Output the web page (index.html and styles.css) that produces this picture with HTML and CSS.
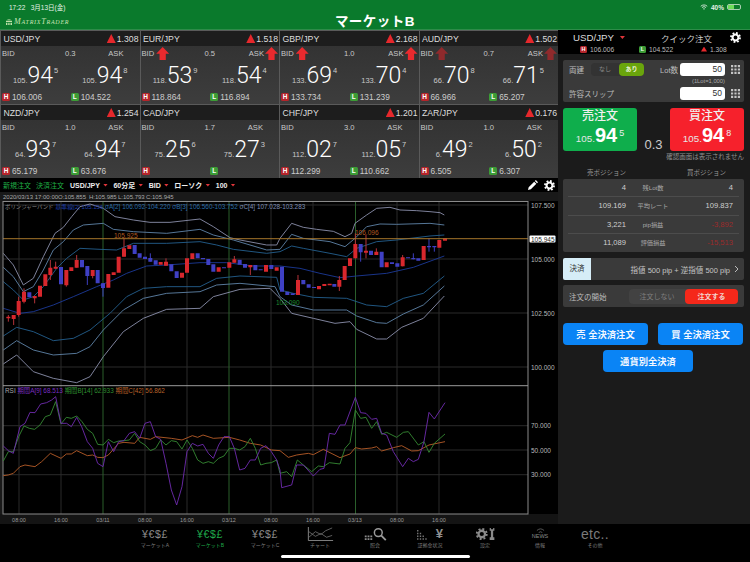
FILE: index.html
```html
<!DOCTYPE html>
<html lang="ja">
<head>
<meta charset="utf-8">
<title>マーケットB</title>
<link rel="stylesheet" href="styles.css">
</head>
<body>
<svg class="defs" width="0" height="0" aria-hidden="true">
  <symbol id="gear" viewBox="0 0 16 16">
    <circle cx="8" cy="8" r="4.3" fill="none" stroke="currentColor" stroke-width="3"/>
    <circle cx="8" cy="8" r="6.6" fill="none" stroke="currentColor" stroke-width="2.6" stroke-dasharray="2.6 2.58"/>
  </symbol>
  <symbol id="dots" viewBox="0 0 9 9">
    <path fill="currentColor" d="M0 0h2.2v2.2H0zM3.4 0h2.2v2.2H3.4zM6.8 0H9v2.2H6.8zM0 3.4h2.2v2.2H0zM3.4 3.4h2.2v2.2H3.4zM6.8 3.4H9v2.2H6.8zM0 6.8h2.2V9H0zM3.4 6.8h2.2V9H3.4zM6.8 6.8H9V9H6.8z"/>
  </symbol>
</svg>
<div class="app">
  <header class="top">
    <div class="status">
      <span>17:22&nbsp;&nbsp;&nbsp;3月13日(金)</span>
      <span class="status-right">
        <svg class="wifi" viewBox="0 0 10 8"><path d="M.7 3a6.200 6.200 0 0 1 8.600 0M2.300 4.700a3.900 3.900 0 0 1 5.400 0" fill="none" stroke="#e8f2ea" stroke-width="1.100"/><path d="M3.800 6.200a1.700 1.700 0 0 1 2.400 0L5 7.600z" fill="#e8f2ea"/></svg>
        <span>40%</span>
        <span class="battery"><span class="battery-fill"></span></span>
      </span>
    </div>
    <div class="titlebar">
      <div class="logo">
        <svg class="logo-mark" viewBox="0 0 7 7"><path d="M0 2h7v1.4H0zM0 4.4h1.6V7H0zM2.6 4.4h1.6V7H2.6zM5.2 4.4H7V7H5.2zM2 0h1v1.4H2zM4 0h1v1.4H4z" fill="#bfe0a8"/></svg>
        <span class="logo-text">MatrixTrader</span>
      </div>
      <h1 class="title">マーケットB</h1>
      <div></div>
    </div>
  </header>

  <main class="main">
    <section class="left">
      <div class="tiles">
        <article class="tile">
          <div class="tile-head"><span>USD/JPY</span><span class="chg"><i class="tri"></i>1.308</span></div>
          <div class="tile-body">
            <div class="lbls"><span class="lbl"><span>BID</span></span><span>0.3</span><span class="lbl ask"><span>ASK</span><i class="slot"></i></span></div>
            <div class="rates"><div class="rate"><small>105.</small><b>94</b><sup>5</sup></div><div class="rate"><small>105.</small><b>94</b><sup>8</sup></div></div>
            <div class="hl"><div><i class="bdg h">H</i>106.006</div><div><i class="bdg l">L</i>104.522</div></div>
          </div>
        </article>
        <article class="tile">
          <div class="tile-head"><span>EUR/JPY</span><span class="chg"><i class="tri"></i>1.518</span></div>
          <div class="tile-body">
            <div class="lbls"><span class="lbl"><span>BID</span><i class="arrow"></i></span><span>0.5</span><span class="lbl ask"><span>ASK</span><i class="arrow"></i></span></div>
            <div class="rates"><div class="rate"><small>118.</small><b>53</b><sup>9</sup></div><div class="rate"><small>118.</small><b>54</b><sup>4</sup></div></div>
            <div class="hl"><div><i class="bdg h">H</i>118.864</div><div><i class="bdg l">L</i>116.894</div></div>
          </div>
        </article>
        <article class="tile">
          <div class="tile-head"><span>GBP/JPY</span><span class="chg"><i class="tri"></i>2.168</span></div>
          <div class="tile-body">
            <div class="lbls"><span class="lbl"><span>BID</span><i class="arrow"></i></span><span>1.0</span><span class="lbl ask"><span>ASK</span><i class="arrow"></i></span></div>
            <div class="rates"><div class="rate"><small>133.</small><b>69</b><sup>4</sup></div><div class="rate"><small>133.</small><b>70</b><sup>4</sup></div></div>
            <div class="hl"><div><i class="bdg h">H</i>133.734</div><div><i class="bdg l">L</i>131.239</div></div>
          </div>
        </article>
        <article class="tile">
          <div class="tile-head"><span>AUD/JPY</span><span class="chg"><i class="tri"></i>1.502</span></div>
          <div class="tile-body">
            <div class="lbls"><span class="lbl"><span>BID</span><i class="arrow dim"></i></span><span>0.7</span><span class="lbl ask"><span>ASK</span><i class="arrow dim"></i></span></div>
            <div class="rates"><div class="rate"><small>66.</small><b>70</b><sup>8</sup></div><div class="rate"><small>66.</small><b>71</b><sup>5</sup></div></div>
            <div class="hl"><div><i class="bdg h">H</i>66.966</div><div><i class="bdg l">L</i>65.207</div></div>
          </div>
        </article>
        <article class="tile">
          <div class="tile-head"><span>NZD/JPY</span><span class="chg"><i class="tri"></i>1.254</span></div>
          <div class="tile-body">
            <div class="lbls"><span class="lbl"><span>BID</span></span><span>1.0</span><span class="lbl ask"><span>ASK</span><i class="slot"></i></span></div>
            <div class="rates"><div class="rate"><small>64.</small><b>93</b><sup>7</sup></div><div class="rate"><small>64.</small><b>94</b><sup>7</sup></div></div>
            <div class="hl"><div><i class="bdg h">H</i>65.179</div><div><i class="bdg l">L</i>63.676</div></div>
          </div>
        </article>
        <article class="tile">
          <div class="tile-head"><span>CAD/JPY</span></div>
          <div class="tile-body">
            <div class="lbls"><span class="lbl"><span>BID</span></span><span>1.7</span><span class="lbl ask"><span>ASK</span><i class="slot"></i></span></div>
            <div class="rates"><div class="rate"><small>75.</small><b>25</b><sup>6</sup></div><div class="rate"><small>75.</small><b>27</b><sup>3</sup></div></div>
            <div class="hl"><div><i class="bdg h">H</i></div><div><i class="bdg l">L</i></div></div>
          </div>
        </article>
        <article class="tile">
          <div class="tile-head"><span>CHF/JPY</span><span class="chg"><i class="tri"></i>1.201</span></div>
          <div class="tile-body">
            <div class="lbls"><span class="lbl"><span>BID</span></span><span>3.0</span><span class="lbl ask"><span>ASK</span><i class="slot"></i></span></div>
            <div class="rates"><div class="rate"><small>112.</small><b>02</b><sup>7</sup></div><div class="rate"><small>112.</small><b>05</b><sup>7</sup></div></div>
            <div class="hl"><div><i class="bdg h">H</i>112.299</div><div><i class="bdg l">L</i>110.662</div></div>
          </div>
        </article>
        <article class="tile">
          <div class="tile-head"><span>ZAR/JPY</span><span class="chg"><i class="tri"></i>0.176</span></div>
          <div class="tile-body">
            <div class="lbls"><span class="lbl"><span>BID</span></span><span>1.0</span><span class="lbl ask"><span>ASK</span><i class="slot"></i></span></div>
            <div class="rates"><div class="rate"><small>6.</small><b>49</b><sup>2</sup></div><div class="rate"><small>6.</small><b>50</b><sup>2</sup></div></div>
            <div class="hl"><div><i class="bdg h">H</i>6.505</div><div><i class="bdg l">L</i>6.307</div></div>
          </div>
        </article>
      </div>

      <div class="toolbar">
        <span class="tool-green">新規注文</span>
        <span class="tool-green">決済注文</span>
        <span class="tool">USD/JPY<i class="caret"></i></span>
        <span class="tool">60分足<i class="caret"></i></span>
        <span class="tool">BID<i class="caret"></i></span>
        <span class="tool">ローソク<i class="caret"></i></span>
        <span class="tool">100<i class="caret"></i></span>
        <span class="tool-icons">
          <svg class="pencil" viewBox="0 0 12 12"><path d="M0 12l.8-3.4 6.6-6.6 2.6 2.6-6.6 6.6zM8.2 1.2 9.4 0 12 2.6l-1.2 1.2z" fill="#fff"/></svg>
          <svg class="tool-gear"><use href="#gear"/></svg>
        </span>
      </div>

      <svg class="chart" viewBox="0 192 558 332" width="558" height="332">
        <rect x="0" y="192" width="558" height="332" fill="#000"/>
        <rect x="0" y="192" width="558" height="9" fill="#191919"/>
        <rect x="0" y="192" width="3" height="322" fill="#191919"/>
        <rect x="0" y="514" width="558" height="10" fill="#141414"/>
        <text class="ohlc" y="198.5"><tspan x="3">2020/03/13 17:00:00</tspan><tspan x="58">O:105.855</tspan><tspan x="89">H:105.985</tspan><tspan x="118">L:105.793</tspan><tspan x="146">C:105.945</tspan></text>

        <path class="grid" d="M3 205H528M3 259H528M3 313H528M3 367H528M3 425.7H528M3 450H528M3 474.7H528M19 201V514M61 201V514M145 201V514M187 201V514M271 201V514M313 201V514M397 201V514M439 201V514"/>
        <path class="grid-green" d="M103 201V514M229 201V514M355.500 201V514"/>

        <g transform="translate(0 190) scale(.33333)">
          <polyline class="b-c" points="10,190 40,225 70,285 100,265 130,200 165,130 190,112 215,80 240,50 270,42 310,55 345,80 400,90 450,97 510,97 600,87 640,110 690,143 720,150 800,165 830,165 840,145 875,100 910,112 950,118 1000,124 1035,140 1055,130 1065,100 1100,75 1130,55 1170,52 1200,60 1250,62 1290,65 1320,68 1333,75"/>
          <polyline class="b-b" points="10,232 40,260 70,305 100,290 130,240 160,180 190,155 220,120 250,105 310,100 340,118 400,125 500,130 600,118 640,135 700,150 800,180 840,178 875,133 910,145 990,155 1035,170 1065,145 1100,110 1140,102 1190,103 1290,100 1333,105"/>
          <polyline class="b-a" points="10,275 40,300 70,330 100,320 130,290 170,235 200,205 240,175 300,178 350,180 400,160 500,160 600,155 650,165 700,178 800,190 840,185 875,168 910,175 990,190 1040,200 1070,175 1130,155 1190,150 1290,138 1333,135"/>
          <polyline class="b-m" points="10,355 60,370 100,365 160,345 220,320 290,290 340,270 380,250 440,228 500,225 600,218 680,218 760,228 840,228 900,235 960,250 1020,263 1070,258 1160,250 1240,232 1333,198"/>
          <polyline class="b-a" points="10,438 50,412 100,425 160,452 220,445 270,420 330,370 380,320 430,295 500,290 600,290 650,265 720,258 830,262 840,300 880,310 940,322 1040,325 1100,345 1160,350 1210,325 1270,310 1333,258"/>
          <polyline class="b-b" points="10,480 50,452 100,480 160,495 230,490 270,470 310,420 370,360 430,325 500,310 600,305 650,285 720,280 825,290 840,320 875,345 940,360 1040,360 1070,378 1130,398 1160,400 1210,372 1270,345 1333,288"/>
          <polyline class="b-c" points="10,522 50,495 100,545 160,565 230,578 270,560 310,500 370,425 430,385 500,358 600,355 640,320 720,298 810,295 840,325 875,370 940,385 1005,400 1050,395 1070,418 1130,447 1160,447 1205,412 1270,385 1333,318"/>

          <path class="wick-r" d="M25 375V395M41 375V405M56 320V380M72 295V340M104 318V340M151 210V270M167 215V236M199 240V290M230 195V233M278 240V265M372 145V200M498 205V227M703 198V218M751 225V255M894 255V315M1018 258V303M1066 130V205M1098 135V205M1129 175V195M1208 195V229"/>
          <path class="wick-b" d="M262 228V285M309 280V320M451 190V215M1082 162V215M1240 190V208M1287 145V185M1303 168V185"/>
          <path class="body-r" d="M19 380h12v5h-12zM35 375h12v12h-12zM50 333h12v42h-12zM66 305h12v30h-12zM98 318h12v7h-12zM114 287h12v33h-12zM130 253h12v35h-12zM145 233h12v22h-12zM161 230h12v6h-12zM193 240h12v46h-12zM208 232h12v11h-12zM224 210h12v23h-12zM272 240h12v18h-12zM319 252h12v41h-12zM335 247h12v8h-12zM350 200h12v48h-12zM366 175h12v25h-12zM382 166h12v11h-12zM476 216h12v8h-12zM492 215h12v12h-12zM540 248h12v15h-12zM555 205h12v43h-12zM571 190h12v17h-12zM650 232h12v13h-12zM682 217h12v16h-12zM697 208h12v10h-12zM745 225h12v7h-12zM792 225h12v20h-12zM824 232h12v10h-12zM888 270h12v45h-12zM951 288h12v10h-12zM967 282h12v6h-12zM983 281h12v5h-12zM1012 270h12v20h-12zM1028 228h12v42h-12zM1044 205h12v23h-12zM1060 162h12v43h-12zM1092 182h12v6h-12zM1123 185h12v10h-12zM1154 217h12v15h-12zM1202 202h12v27h-12zM1265 168h12v42h-12zM1312 150h12v23h-12zM1329 145h12v7h-12z"/>
          <path class="body-b" d="M82 307h12v15h-12zM177 231h12v52h-12zM240 210h12v22h-12zM256 228h12v30h-12zM287 240h12v40h-12zM303 280h12v14h-12zM398 165h12v27h-12zM413 190h12v13h-12zM429 200h12v7h-12zM445 204h12v11h-12zM461 211h12v13h-12zM508 223h12v21h-12zM524 244h12v20h-12zM587 190h12v15h-12zM603 204h12v4h-12zM619 207h12v18h-12zM634 223h12v22h-12zM666 232h12v3h-12zM713 209h12v15h-12zM729 222h12v11h-12zM760 225h12v16h-12zM776 238h12v3h-12zM808 225h12v12h-12zM840 230h12v75h-12zM856 305h12v10h-12zM872 310h12v5h-12zM904 270h12v13h-12zM920 283h12v10h-12zM936 291h12v3h-12zM997 282h12v8h-12zM1076 162h12v25h-12zM1107 182h12v13h-12zM1139 185h12v47h-12zM1170 217h12v5h-12zM1186 220h12v10h-12zM1218 202h12v3h-12zM1234 204h12v4h-12zM1249 205h12v7h-12zM1281 168h12v4h-12zM1297 168h12v4h-12z"/>
        </g>

        <path class="last" d="M3 238.700H528"/>
        <text class="hint-o" x="114" y="238">105.925</text>
        <text class="hint-o" x="355" y="234.500">106.096</text>
        <text class="hint-g" x="276" y="305">103.090</text>

        <text class="boll" x="5" y="208.500"><tspan class="b0">ボリンジャーバンド</tspan> <tspan class="b1">基準線[2] 105.156</tspan> <tspan class="b2">σA[2] 106.092-104.220</tspan> <tspan class="b2">σB[3] 106.560-103.752</tspan> <tspan class="b3">σC[4] 107.028-103.283</tspan></text>

        <rect class="frame" x="3" y="201.500" width="525" height="312.500"/>
        <path class="divider" d="M3 385.700H528"/>

        <g transform="translate(0 380) scale(.33333)">
          <polyline class="r-o" points="10,287 25,285 40,280 60,260 75,255 105,260 125,245 151,220 183,235 199,222 214,222 230,212 262,227 278,225 293,232 309,233 325,225 356,190 372,187 404,190 419,172 451,178 467,170 514,175 546,180 577,167 593,172 609,165 640,175 688,172 719,180 751,190 782,195 814,210 840,212 865,232 890,225 925,220 940,224 970,208 990,218 1020,233 1050,222 1066,203 1085,207 1115,204 1130,200 1145,213 1180,203 1205,197 1235,213 1255,212 1287,195 1335,185"/>
          <polyline class="r-g" points="10,243 25,215 40,215 56,170 72,138 88,145 104,148 120,135 136,110 151,105 167,65 183,132 199,112 214,115 230,108 246,125 262,148 278,160 293,193 309,195 325,178 341,188 356,183 372,182 388,180 404,160 419,185 435,195 451,212 467,205 482,180 498,195 514,182 530,185 546,207 561,180 577,205 593,240 609,250 625,245 640,250 656,235 672,228 688,205 703,205 719,210 735,200 751,175 766,205 782,255 798,250 814,248 830,240 840,280 860,275 875,290 892,240 910,255 935,275 955,258 970,260 988,248 1020,252 1035,205 1050,188 1066,90 1082,115 1098,112 1115,145 1130,125 1145,163 1160,157 1190,172 1210,157 1225,155 1255,195 1272,185 1287,217 1303,190 1335,162"/>
          <polyline class="r-p" points="10,198 25,212 40,220 60,140 75,130 90,97 105,98 122,72 140,68 155,60 167,50 183,130 200,130 214,140 230,112 245,140 262,185 278,205 293,250 309,260 325,185 341,215 356,185 372,182 388,160 404,155 419,175 435,130 451,125 467,170 482,178 498,250 514,330 530,375 546,320 561,215 577,190 593,198 609,193 625,220 640,235 656,195 672,170 688,170 703,205 719,270 735,265 751,240 766,240 782,205 798,197 814,215 830,240 840,270 845,323 875,315 890,255 910,255 940,288 960,268 972,265 988,160 1005,163 1020,135 1035,135 1066,52 1082,98 1098,100 1115,118 1130,115 1145,160 1160,165 1180,215 1208,260 1225,235 1240,245 1255,238 1272,185 1287,97 1303,117 1335,68"/>
        </g>
        <text class="rsi" x="5" y="393"><tspan class="r0">RSI</tspan> <tspan class="r1">期間A[9] 68.513</tspan> <tspan class="r2">期間B[14] 62.933</tspan> <tspan class="r3">期間C[42] 56.862</tspan></text>

        <g class="axis-y">
          <text x="531" y="207.500">107.500</text>
          <text x="531" y="261.500">105.000</text>
          <text x="531" y="315.500">102.500</text>
          <text x="531" y="369.500">100.000</text>
          <text x="531" y="428">70.000</text>
          <text x="531" y="452.500">50.000</text>
          <text x="531" y="477">30.000</text>
        </g>
        <rect class="tag" x="529.500" y="235.500" width="26" height="7" rx="1"/>
        <text class="tag-text" x="531" y="241.500">105.945</text>

        <g class="axis-x">
          <text x="19" y="522">08:00</text>
          <text x="61" y="522">16:00</text>
          <text x="103" y="522">03/11</text>
          <text x="145" y="522">08:00</text>
          <text x="187" y="522">16:00</text>
          <text x="229" y="522">03/12</text>
          <text x="271" y="522">08:00</text>
          <text x="313" y="522">16:00</text>
          <text x="355" y="522">03/13</text>
          <text x="397" y="522">08:00</text>
          <text x="439" y="522">16:00</text>
        </g>
      </svg>
    </section>

    <aside class="panel">
      <div class="qhead">
        <div class="qrow1">
          <span class="qpair">USD/JPY<i class="caret big"></i></span>
          <span class="qtitle">クイック注文</span>
          <svg class="qgear"><use href="#gear"/></svg>
        </div>
        <div class="qrow2">
          <span><i class="bdg h mini">H</i>106.006</span>
          <span><i class="bdg l mini">L</i>104.522</span>
          <span><i class="tri mini-tri"></i>1.308</span>
        </div>
      </div>

      <div class="card settings">
        <div class="set-row">
          <span class="set-label">両建</span>
          <span class="seg"><span class="seg-off">なし</span><span class="seg-on">あり</span></span>
          <span class="set-lot">Lot数</span>
          <span class="field">50</span>
          <svg class="keypad"><use href="#dots"/></svg>
        </div>
        <div class="set-note">(1Lot=1,000)</div>
        <div class="set-row">
          <span class="set-label">許容スリップ</span>
          <span class="field push">50</span>
          <svg class="keypad"><use href="#dots"/></svg>
        </div>
      </div>

      <div class="trade">
        <button class="trade-btn sell"><span class="trade-title">売注文</span><span class="trade-rate"><small>105.</small><b>94</b><sup>5</sup></span></button>
        <span class="trade-spread">0.3</span>
        <button class="trade-btn buy"><span class="trade-title">買注文</span><span class="trade-rate"><small>105.</small><b>94</b><sup>8</sup></span></button>
      </div>
      <div class="confirm">確認画面は表示されません</div>

      <div class="pos-head"><span>売ポジション</span><span>買ポジション</span></div>
      <div class="card pos">
        <div class="pos-row"><span>4</span><em>残Lot数</em><span>4</span></div>
        <div class="pos-row"><span>109.169</span><em>平均レート</em><span>109.837</span></div>
        <div class="pos-row"><span>3,221</span><em>pip損益</em><span class="neg">-3,892</span></div>
        <div class="pos-row"><span>11,089</span><em>評価損益</em><span class="neg">-15,513</span></div>
      </div>

      <div class="card settle">
        <span class="settle-tag">決済</span>
        <span class="settle-text">指値 500 pip + 逆指値 500 pip</span>
        <svg class="chev" viewBox="0 0 5 8"><path d="M1 1l3 3-3 3" fill="none" stroke="#bbb" stroke-width="1"/></svg>
      </div>

      <div class="card start">
        <span class="start-label">注文の開始</span>
        <span class="start-seg"><span class="start-off">注文しない</span><span class="start-on">注文する</span></span>
      </div>

      <div class="closers">
        <button class="blue">売 全決済注文</button>
        <button class="blue">買 全決済注文</button>
        <button class="blue wide">通貨別全決済</button>
      </div>
    </aside>
  </main>

  <nav class="tabs">
    <div class="tab"><span class="fx">¥€$£</span><span class="tab-label">マーケットA</span></div>
    <div class="tab active"><span class="fx">¥€$£</span><span class="tab-label">マーケットB</span></div>
    <div class="tab"><span class="fx">¥€$£</span><span class="tab-label">マーケットC</span></div>
    <div class="tab">
      <svg class="tab-icon" viewBox="0 0 27 15"><path d="M.5 0v14.500H27" fill="none" stroke="#8a8a8a"/><path d="M1 5l7 5 6-3 6 4 6-2M1 11l7-6 6 3 5-4 7-3" fill="none" stroke="#7a7a7a" stroke-width=".8"/></svg>
      <span class="tab-label">チャート</span>
    </div>
    <div class="tab">
      <svg class="tab-icon" viewBox="0 0 27 15"><path d="M2 9h2v2H2zM5 9h2v2H5zM8 9h2v2H8zM2 12h2v2H2zM5 12h2v2H5zM8 12h2v2H8z" fill="#8a8a8a"/><circle cx="16.500" cy="6" r="4.200" fill="none" stroke="#9a9a9a" stroke-width="1.600"/><path d="M19.500 9l5 5" stroke="#9a9a9a" stroke-width="2"/></svg>
      <span class="tab-label">照会</span>
    </div>
    <div class="tab">
      <span class="yen-wrap"><svg class="yen-dots" viewBox="0 0 13 12"><path d="M0 0h1.500v1.500H0zM0 3h1.500v1.500H0zM3 3h1.500v1.500H3zM0 6h1.500v1.500H0zM3 6h1.500v1.500H3zM6 6h1.500v1.500H6zM0 9h1.500v1.500H0zM3 9h1.500v1.500H3zM6 9h1.500v1.500H6zM9 9h1.500v1.500H9z" fill="#777"/></svg><b class="yen">¥</b></span>
      <span class="tab-label">証拠金状況</span>
    </div>
    <div class="tab">
      <svg class="tab-icon" viewBox="0 0 27 15"><g transform="translate(3 1)" color="#8a8a8a"><use href="#gear" width="13" height="13"/></g><path d="M18 1v3h1.300v7H18v3h5v-3h-1.300V4H23V1h-1.300v1.500h-2.400V1z" fill="#8a8a8a"/></svg>
      <span class="tab-label">設定</span>
    </div>
    <div class="tab">
      <span class="news"><svg class="news-arcs" viewBox="0 0 10 5"><path d="M1 2.500a6 6 0 0 1 8 0M3 4.800a3 3 0 0 1 4 0" fill="none" stroke="#777" stroke-width=".8"/></svg><span class="news-text">NEWS</span></span>
      <span class="tab-label">情報</span>
    </div>
    <div class="tab"><span class="etc">etc..</span><span class="tab-label">その他</span></div>
  </nav>
  <div class="home-row"><span class="home"></span></div>
</div>
</body>
</html>
```

FILE: styles.css
```css
* { box-sizing: border-box; }
html, body { margin: 0; padding: 0; overflow: hidden; background: #000; }
body { font-family: "Liberation Sans", "Noto Sans CJK JP", sans-serif; color: #ddd; }
i, em { font-style: normal; }
.defs { position: absolute; }
.app { width: 750px; height: 562px; display: flex; flex-direction: column; overflow: hidden; background: #000; }

/* header */
.top { height: 30px; flex: none; background: #0a7a2c; border-bottom: 1px solid #2d8c49; color: #fff; }
.status { height: 14px; padding: 1px 9px; display: flex; justify-content: space-between; align-items: center; font-size: 6.5px; color: #e6f2e8; }
.status-right { display: flex; align-items: center; gap: 3px; font-weight: 700; }
.wifi { width: 8px; height: 6px; }
.battery { width: 14px; height: 6px; border: 1px solid #a8cfb0; border-radius: 2px; padding: 0; display: block; }
.battery-fill { display: block; width: 6px; height: 100%; background: #6fdc5a; }
.titlebar { height: 15px; display: grid; grid-template-columns: 1fr auto 1fr; align-items: center; }
.logo { display: flex; align-items: center; gap: 2px; padding-left: 6px; color: #c8e3b5; }
.logo-mark { width: 6px; height: 6px; }
.logo-text { font-family: "Liberation Serif", serif; font-style: italic; font-variant: small-caps; font-size: 8px; letter-spacing: .75px; }
.title { margin: 0; font-size: 13.500px; line-height: 15px; font-weight: 700; color: #fff; letter-spacing: .5px; }

.main { flex: none; height: 494px; display: flex; }
.left { width: 558px; flex: none; display: flex; flex-direction: column; }

/* tiles */
.tiles { height: 148px; flex: none; display: grid; grid-template-columns: repeat(4, 138.5px); grid-auto-rows: 73px; gap: 1px; padding: 1px 0 0 1px; background: #5a5a5a; }
.tile { display: flex; flex-direction: column; min-width: 0; }
.tile-head { height: 15px; flex: none; background: #1d1d1d; padding: 0 1px 0 2.500px; display: flex; justify-content: space-between; align-items: center; font-size: 8.700px; color: #ddd; }
.chg { display: flex; align-items: center; gap: 1px; }
.tri { display: block; width: 9px; height: 9px; background: #e6282c; clip-path: polygon(50% 0, 100% 100%, 0 100%); }
.tile-body { flex: 1; min-height: 0; background: linear-gradient(#333, #3d3d3d); color: #ddd; }
.lbls { height: 15px; display: grid; grid-template-columns: 1fr auto 1fr; align-items: center; padding: 0 1px; font-size: 7.600px; color: #c8c8c8; }
.lbl { display: flex; align-items: center; gap: 2px; }
.lbl.ask { justify-content: flex-end; gap: 1px; }
.slot { width: 14px; height: 13px; display: block; }
.arrow { display: block; width: 13px; height: 13px; background: #ea2a2e; clip-path: polygon(50% 0, 100% 52%, 74% 52%, 74% 100%, 26% 100%, 26% 52%, 0 52%); }
.arrow.dim { background: #8f2a2c; }
.rates { height: 30px; display: grid; grid-template-columns: 1fr 1fr; }
.rate { text-align: center; line-height: 30px; white-space: nowrap; color: #fff; }
.rate small { font-size: 7.500px; color: #c8c8c8; }
.rate b { font-family: Roboto, "Liberation Sans", sans-serif; font-weight: 300; font-size: 23px; }
.rate sup { font-size: 7.500px; color: #ccc; line-height: 1; vertical-align: 10.500px; margin-left: 1px; }
.hl { height: 12px; display: grid; grid-template-columns: 1fr 1fr; font-size: 8.300px; color: #ccc; padding-left: 1px; }
.hl > div { display: flex; align-items: center; gap: 2px; }
.bdg { display: block; width: 8px; height: 8px; border-radius: 1.500px; color: #fff; font-size: 6.500px; line-height: 8px; font-weight: 700; text-align: center; flex: none; }
.bdg.h { background: #b5252b; }
.bdg.l { background: #3c9c36; }

/* chart toolbar */
.toolbar { height: 14px; flex: none; background: #000; display: flex; align-items: center; padding: 0 0 0 3px; font-size: 7px; font-weight: 700; color: #eee; }
.tool-green { color: #1fae45; margin-right: 5px; font-weight: 400; }
.tool { display: flex; align-items: center; margin-left: 1px; margin-right: 3.500px; }
.caret { display: block; width: 5px; height: 3px; margin-left: 3px; margin-right: 1px; background: #e0353a; clip-path: polygon(0 0, 100% 0, 50% 100%); }
.tool-icons { margin-left: auto; display: flex; align-items: center; gap: 6px; padding-right: 3px; }
.pencil { width: 10px; height: 10px; }
.tool-gear { width: 11px; height: 11px; color: #fff; }

/* chart */
.chart { display: block; flex: none; }
.chart text { font-family: "Liberation Sans", "Noto Sans CJK JP", sans-serif; }
.chart polyline, .chart path { vector-effect: non-scaling-stroke; fill: none; }
.ohlc { font-size: 6px; fill: #a8a8a8; }
.grid { stroke: #2a2a2a; stroke-width: 1; }
.grid-green { stroke: #2a5f2b; stroke-width: 1; }
.chart .b-c { stroke: #8b90ac; stroke-width: .9; }
.chart .b-b { stroke: #5f83a8; stroke-width: .9; }
.chart .b-a { stroke: #24608f; stroke-width: .9; }
.chart .b-m { stroke: #1c3a98; stroke-width: .9; }
.chart .wick-r { stroke: #b5333a; stroke-width: 1; }
.chart .wick-b { stroke: #3d3fc0; stroke-width: 1; }
.chart .body-r { fill: #d8272d; }
.chart .body-b { fill: #3f40c4; }
.chart .last { stroke: #a5762a; stroke-width: 1; }
.hint-o { font-size: 6.500px; fill: #b05a20; }
.hint-g { font-size: 6.500px; fill: #1f8f30; }
.boll { font-size: 6.400px; }
.b0 { fill: #8a8a8a; font-size: 5.400px; }
.b1 { fill: #1f3fa8; font-size: 6px; }
.b2 { fill: #2a6ca8; }
.b3 { fill: #7d8fb5; }
.frame { fill: none; stroke: #8a8a8a; stroke-width: 1; }
.chart .divider { stroke: #9a9a9a; stroke-width: 1; }
.chart .r-o { stroke: #b85c28; stroke-width: .9; }
.chart .r-g { stroke: #358a33; stroke-width: .9; }
.chart .r-p { stroke: #6f2bb0; stroke-width: .9; }
.rsi { font-size: 6.400px; }
.r0 { fill: #a8a8a8; }
.r1 { fill: #7a2fc0; }
.r2 { fill: #2f8f30; }
.r3 { fill: #b8602a; }
.axis-y text { font-size: 6.500px; fill: #b8b8b8; }
.tag { fill: #fff; }
.tag-text { font-size: 6.500px; fill: #222; }
.axis-x text { font-size: 5.500px; fill: #9a9a9a; text-anchor: middle; }

/* right panel */
.panel { width: 192px; flex: none; background: #1b1b1b; padding-bottom: 0; }
.qhead { height: 24px; background: #000; color: #ddd; }
.qrow1 { height: 14px; display: grid; grid-template-columns: 103px 1fr 20px; align-items: center; padding-top: 1px; }
.qpair { padding-left: 15px; font-size: 9.700px; display: flex; align-items: center; }
.caret.big { margin-left: 6px; }
.qtitle { font-size: 8.500px; color: #ccc; }
.qgear { width: 11px; height: 11px; color: #fff; }
.qrow2 { height: 10px; display: grid; grid-template-columns: 59px 62px 1fr; padding-left: 22px; font-size: 6.700px; color: #bbb; align-items: center; }
.qrow2 > span { display: flex; align-items: center; gap: 3px; }
.bdg.mini { width: 7px; height: 7px; font-size: 5.500px; line-height: 7px; }
.mini-tri { width: 6px; height: 5px; }

.card { background: #3a3a3a; border-radius: 2px; margin: 0 5px 0 5px; width: 181px; }
.settings { margin-top: 6px; height: 42px; padding: 3px 4px 2px 6px; font-size: 7.500px; color: #bdbdbd; }
.set-row { height: 13px; display: flex; align-items: center; }
.set-label { flex: none; }
.seg { margin-left: 7px; width: 53px; height: 13px; display: flex; background: #333; border-radius: 4px; text-align: center; line-height: 13px; font-size: 6px; }
.seg-off { flex: 1; color: #8c8c8c; }
.seg-on { width: 25px; background: #6aa50c; color: #e9f3d8; border-radius: 4px; font-weight: 700; }
.set-lot { margin-left: auto; margin-right: 2px; }
.field { width: 45px; height: 13px; background: #fff; border-radius: 3px; color: #333; font-size: 8.500px; line-height: 13px; text-align: right; padding-right: 3px; flex: none; }
.field.push { margin-left: auto; }
.keypad { width: 9px; height: 9px; margin-left: 6px; color: #c4c4c4; flex: none; }
.set-note { height: 11px; font-size: 5.800px; line-height: 11px; padding-right: 15px; text-align: right; color: #aaa; }

.trade { margin: 6px 6px 0 5px; display: flex; height: 43px; }
.trade-btn { width: 74px; height: 43px; border: 0; border-radius: 3px; padding: 0; display: flex; flex-direction: column; align-items: center; color: #fff; font-family: inherit; }
.sell { background: #0fae4c; }
.buy { background: #f6212c; }
.trade-title { font-size: 12px; line-height: 13px; margin-top: 2px; font-weight: 500; color: #f0f0f0; }
.trade-rate { line-height: 25px; white-space: nowrap; }
.trade-rate small { font-size: 9.800px; color: #e6e6e6; }
.trade-rate b { font-size: 20px; font-weight: 700; }
.trade-rate sup { font-size: 9px; line-height: 1; vertical-align: 6px; margin-left: 2px; color: #eee; }
.trade-spread { flex: 1; text-align: center; font-size: 13px; color: #ccc; align-self: flex-end; line-height: 15px; margin-bottom: -1px; }
.confirm { text-align: right; font-size: 6.500px; line-height: 9px; padding-right: 6px; margin-top: 1px; color: #8f8f8f; }

.pos-head { margin-top: 7px; height: 11px; padding: 0 24px 0 29px; display: flex; justify-content: space-between; font-size: 6.500px; line-height: 9px; color: #9a9a9a; }
.pos { height: 73px; padding: 0 5px; font-size: 7.600px; color: #cfcfcf; }
.pos-row { height: 18.250px; display: grid; grid-template-columns: 58px 54px 1fr; align-items: center; text-align: right; border-bottom: 1px solid #4c4c4c; }
.pos-row:last-child { border-bottom: 0; }
.pos-row em { text-align: center; font-size: 6.200px; color: #a8a8a8; }
.pos-row span:last-child { padding-right: 6px; }
.pos-row .neg { color: #9c2a2a; }

.settle { margin-top: 6px; height: 22px; display: flex; align-items: center; font-size: 7.500px; color: #c4c4c4; overflow: hidden; }
.settle-tag { width: 28px; height: 22px; background: #d6edf7; color: #333; line-height: 22px; text-align: center; flex: none; }
.settle-text { flex: 1; text-align: right; padding-right: 4px; }
.chev { width: 5px; height: 8px; margin-right: 5px; flex: none; }

.start { margin-top: 5px; height: 22px; display: flex; align-items: center; padding: 0 6px; font-size: 7.500px; color: #bdbdbd; }
.start-seg { margin-left: auto; width: 109px; height: 15px; display: flex; background: #424242; border-radius: 4px; line-height: 15px; text-align: center; font-size: 7px; }
.start-off { flex: 1; color: #7e7e7e; }
.start-on { width: 53px; background: #f5281a; border-radius: 4px; color: #f3d3cc; font-weight: 700; }

.closers { margin: 16px 0 0 5px; width: 180px; display: grid; grid-template-columns: 85px 85px; gap: 5px 10px; justify-content: start; }
.blue { height: 22px; border: 0; padding: 0; background: #0a84f5; border-radius: 4px; font-family: inherit; font-size: 9.300px; font-weight: 700; color: #f2f7ff; }
.wide { grid-column: 1 / 3; width: 90px; margin-left: 40px; }

/* tabs */
.tabs { height: 26px; flex: none; display: flex; justify-content: center; background: #000; }
.tab { width: 55px; padding-top: 3px; display: flex; flex-direction: column; align-items: center; color: #8a8a8a; }
.tab.active { color: #1fa84a; }
.tab-label { font-size: 5px; line-height: 7px; margin-top: 1px; color: #7d7d7d; white-space: nowrap; }
.tab.active .tab-label { color: #1fa84a; }
.fx { font-size: 10.500px; line-height: 14px; letter-spacing: .7px; height: 14px; }
.tab-icon { width: 27px; height: 14px; }
.yen-wrap { height: 14px; width: 26px; display: flex; align-items: flex-end; justify-content: space-between; }
.yen-dots { width: 12px; height: 11px; }
.yen { font-size: 13px; line-height: 14px; color: #8f8f8f; }
.news { height: 14px; display: flex; flex-direction: column; align-items: center; }
.news-arcs { width: 9px; height: 5px; margin-top: 1px; }
.news-text { font-size: 5.500px; line-height: 7px; color: #8a8a8a; }
.etc { font-size: 14px; line-height: 14px; height: 14px; color: #7a7a7a; letter-spacing: .3px; }
.home-row { flex: 1; display: flex; justify-content: center; align-items: flex-start; padding-top: 5px; background: #000; }
.home { width: 189px; height: 3px; border-radius: 2px; background: #fff; }
```
